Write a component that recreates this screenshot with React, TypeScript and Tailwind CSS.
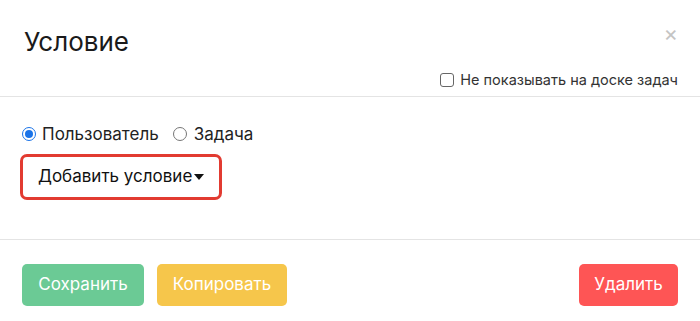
import React from "react";

export default function App() {
  return (
    <div className="w-[700px] h-[321px] bg-white text-[#212529] relative" style={{ fontFamily: "Inter, 'Noto Sans', sans-serif" }}>
      <div className="h-[97px] border-b border-[#e4e4e4] relative">
        <div className="pl-6 pt-[26px] text-[26px] leading-[32px] text-[#1a1a1a]">Условие</div>
        <button className="absolute right-[22px] top-[22px] text-[22px] leading-none text-[#c4c4c4]">×</button>
        <label className="absolute right-[22px] top-[69px] flex items-center gap-[6px] text-[14.5px] text-[#333]">
          <span className="w-[14px] h-[14px] border border-[#666] rounded-[3px] bg-white" />
          <span>Не показывать на доске задач</span>
        </label>
      </div>
      <div className="h-[143px] border-b border-[#e4e4e4] px-5 pt-[24px]">
        <div className="flex items-center text-[17px] leading-[26px] text-[#222]">
          <span className="w-[14px] h-[14px] rounded-full border-[1.5px] border-[#1a73e8] flex items-center justify-center ml-[2px] mr-[6px]">
            <span className="w-[8px] h-[8px] rounded-full bg-[#1a73e8]" />
          </span>
          <span>Пользователь</span>
          <span className="w-[14px] h-[14px] rounded-full border-[1.5px] border-[#767676] ml-[14px] mr-[7px]" />
          <span>Задача</span>
        </div>
        <div className="mt-[7px] inline-flex items-center h-[46px] w-[202px] border-[3px] border-[#e23b31] rounded-[7px] pl-[15px] text-[17px] text-[#111]">
          <span>Добавить условие</span>
          <svg width="10" height="6" viewBox="0 0 10 6" className="ml-[2px]"><path d="M0 0h10L5 6z" fill="#111" /></svg>
        </div>
      </div>
      <div className="flex items-center px-[22px] pt-[24px]">
        <button className="h-[42px] w-[122px] rounded-[5px] bg-[#6bca95] text-white text-[17px]">Сохранить</button>
        <button className="ml-[13px] h-[42px] w-[130px] rounded-[5px] bg-[#f6c64b] text-white text-[17px]">Копировать</button>
        <div className="flex-1" />
        <button className="h-[42px] w-[99px] rounded-[5px] bg-[#fe5555] text-white text-[17px]">Удалить</button>
      </div>
    </div>
  );
}
